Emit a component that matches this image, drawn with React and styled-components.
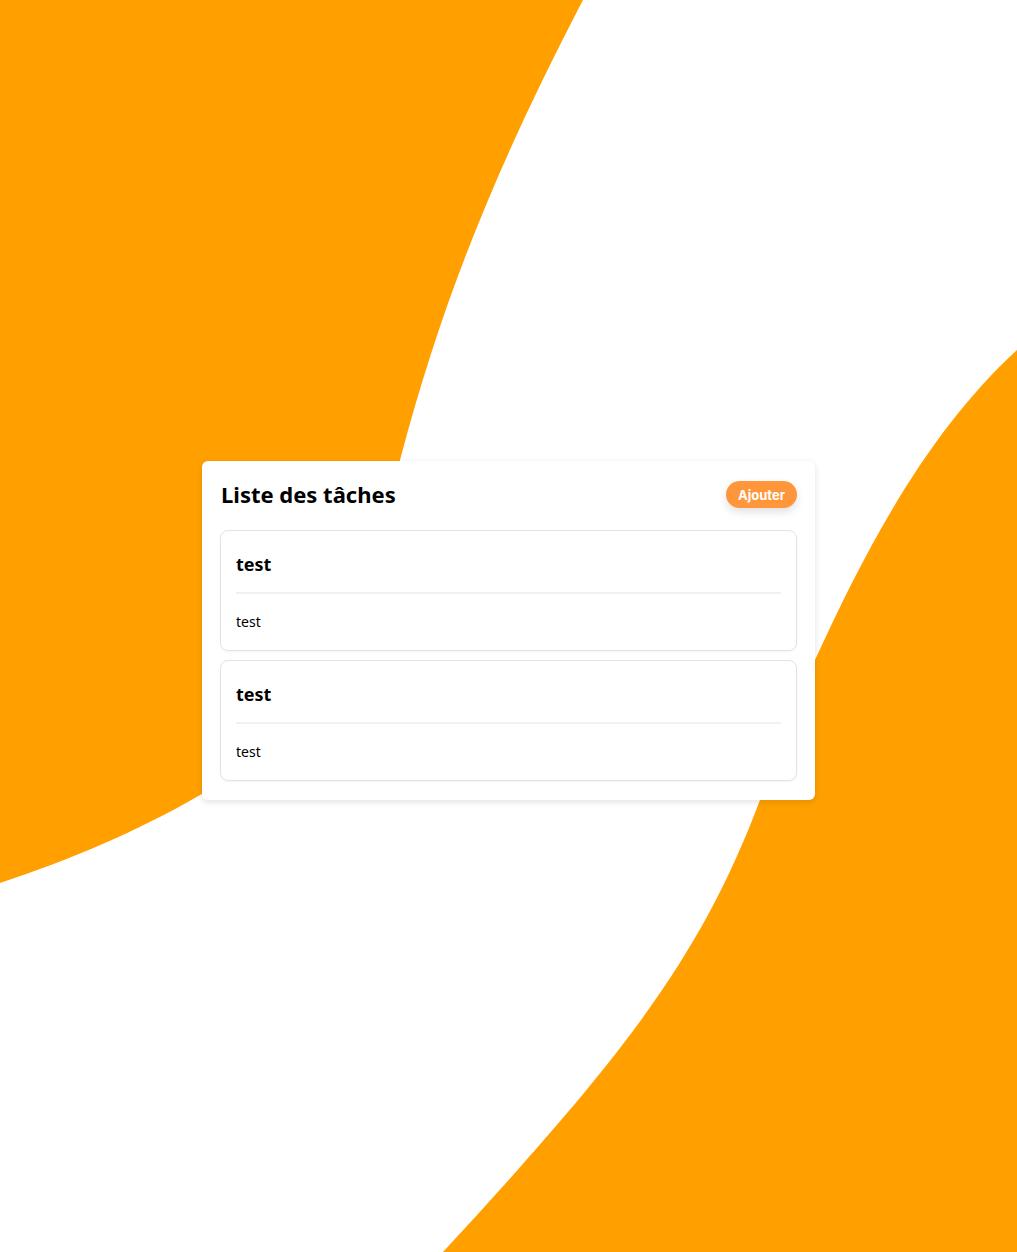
import React from 'react';
import styled, { createGlobalStyle } from 'styled-components';

const GlobalStyle = createGlobalStyle`
  html, body {
    margin: 0;
    padding: 0;
    background: #ffffff;
    font-family: "Noto Sans", "Open Sans", sans-serif;
    color: #000;
  }
`;

const Page = styled.div`
  position: relative;
  width: 1017px;
  height: 1252px;
  overflow: hidden;
  display: flex;
  justify-content: center;
  padding-top: 461px;
  box-sizing: border-box;
`;

const Backdrop = styled.svg`
  position: absolute;
  inset: 0;
  width: 100%;
  height: 100%;
  z-index: 0;
`;

const Card = styled.div`
  position: relative;
  z-index: 1;
  width: 613px;
  height: max-content;
  box-sizing: border-box;
  padding: 20px 18px 19px 18px;
  background: #fff;
  border-radius: 6px;
  box-shadow: 0 2px 6px rgba(0, 0, 0, 0.12);
  display: flex;
  flex-direction: column;
  gap: 9px;
`;

const Header = styled.div`
  display: flex;
  align-items: center;
  justify-content: space-between;
  height: 27px;
  margin-bottom: 13px;
  padding-left: 1px;
`;

const Title = styled.h2`
  margin: 0;
  font-size: 22px;
  font-weight: 700;
  line-height: 27px;
`;

const AddButton = styled.button`
  border: none;
  background: #ff963b;
  color: #fff;
  font-family: Inter, "Noto Sans", sans-serif;
  font-weight: 700;
  font-size: 13px;
  height: 27px;
  padding: 0 12px;
  border-radius: 14px;
  box-shadow: 0 4px 8px rgba(0, 0, 0, 0.12);
  cursor: pointer;
`;

const Task = styled.div`
  border: 1px solid #e3e3e3;
  border-radius: 8px;
  padding: 15px 15px 18px 15px;
  box-shadow: 0 1px 2px rgba(0, 0, 0, 0.04);
`;

const TaskTitle = styled.h3`
  margin: 0;
  font-size: 18px;
  font-weight: 700;
  line-height: 36px;
`;

const Divider = styled.hr`
  border: none;
  height: 2px;
  background: #f1f1f1;
  margin: 10px 0 18px;
`;

const TaskBody = styled.p`
  margin: 0;
  font-size: 14px;
  line-height: 20px;
`;

const tasks = [
  { title: 'test', body: 'test' },
  { title: 'test', body: 'test' },
];

export default function App() {
  return (
    <>
      <GlobalStyle />
      <Page>
        <Backdrop viewBox="0 0 1017 1252" preserveAspectRatio="none">
          <path
            fill="#ffa000"
            d="M0 0 L583 0 C 500 160, 445 290, 400 460 C 355 630, 300 740, 200 795 C 140 830, 70 860, 0 883 Z"
          />
          <path
            fill="#ffa000"
            d="M1017 350 C 930 430, 870 540, 815 660 C 795 705, 775 760, 760 800 C 700 960, 620 1060, 443 1252 L1017 1252 Z"
          />
        </Backdrop>
        <Card>
          <Header>
            <Title>Liste des tâches</Title>
            <AddButton>Ajouter</AddButton>
          </Header>
          {tasks.map((t, i) => (
            <Task key={i}>
              <TaskTitle>{t.title}</TaskTitle>
              <Divider />
              <TaskBody>{t.body}</TaskBody>
            </Task>
          ))}
        </Card>
      </Page>
    </>
  );
}
